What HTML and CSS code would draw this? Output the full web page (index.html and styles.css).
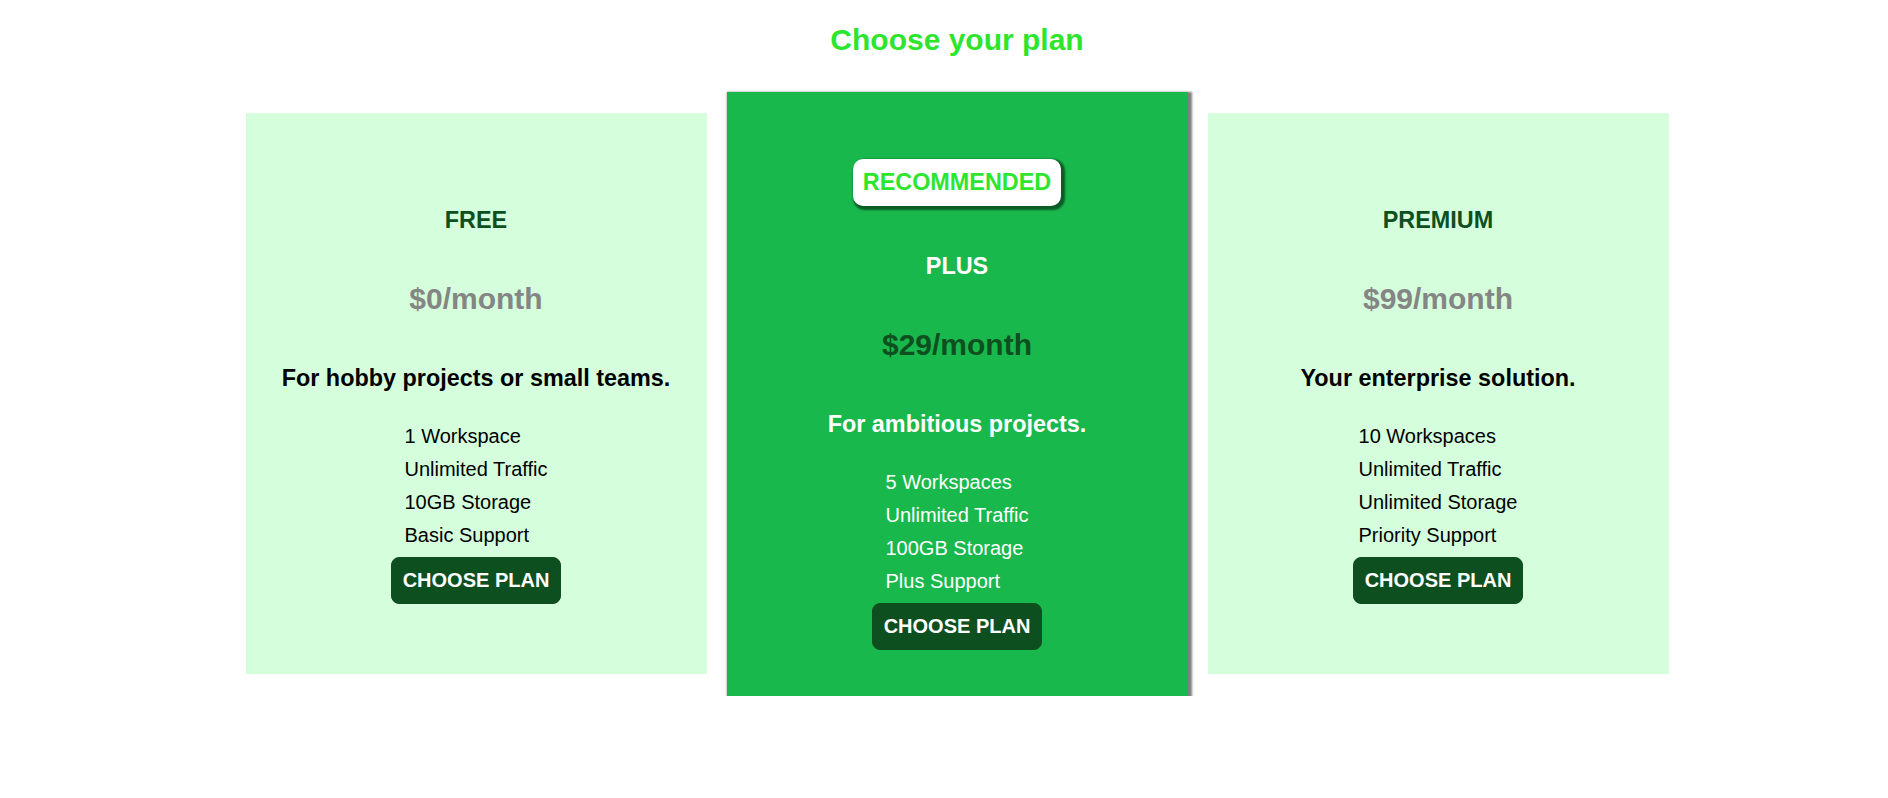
FILE: index.html
```html
<!DOCTYPE html>
<html lang="en">
<head>
<meta charset="utf-8">
<title>Choose your plan</title>
<link rel="stylesheet" href="styles.css">
</head>
<body>
<main class="page">
  <h1 class="section-title">Choose your plan</h1>
  <div class="plans">
    <article class="plan">
      <h1 class="plan__title">FREE</h1>
      <h2 class="plan__price">$0/month</h2>
      <h3 class="plan__hint">For hobby projects or small teams.</h3>
      <ul class="plan__features">
        <li class="plan__feature">1 Workspace</li>
        <li class="plan__feature">Unlimited Traffic</li>
        <li class="plan__feature">10GB Storage</li>
        <li class="plan__feature">Basic Support</li>
      </ul>
      <button class="button">CHOOSE PLAN</button>
    </article>
    <article class="plan plan--highlighted">
      <div class="plan__annotation">RECOMMENDED</div>
      <h1 class="plan__title">PLUS</h1>
      <h2 class="plan__price">$29/month</h2>
      <h3 class="plan__hint">For ambitious projects.</h3>
      <ul class="plan__features">
        <li class="plan__feature">5 Workspaces</li>
        <li class="plan__feature">Unlimited Traffic</li>
        <li class="plan__feature">100GB Storage</li>
        <li class="plan__feature">Plus Support</li>
      </ul>
      <button class="button">CHOOSE PLAN</button>
    </article>
    <article class="plan">
      <h1 class="plan__title">PREMIUM</h1>
      <h2 class="plan__price">$99/month</h2>
      <h3 class="plan__hint">Your enterprise solution.</h3>
      <ul class="plan__features">
        <li class="plan__feature">10 Workspaces</li>
        <li class="plan__feature">Unlimited Traffic</li>
        <li class="plan__feature">Unlimited Storage</li>
        <li class="plan__feature">Priority Support</li>
      </ul>
      <button class="button">CHOOSE PLAN</button>
    </article>
  </div>
</main>
</body>
</html>
```
FILE: styles.css
```css
* {
  box-sizing: border-box;
}

html, body {
  margin: 0;
  padding: 0;
  background: #ffffff;
}

body {
  font-family: "Liberation Sans", Arial, sans-serif;
  font-size: 20px;
  color: #000000;
}

.page {
  display: flex;
  flex-direction: column;
  align-items: center;
  padding: 23px 0 0 26px;
}

.section-title {
  margin: 0 0 34px;
  font-size: 30px;
  font-weight: bold;
  line-height: 34.5px;
  color: #2ee52e;
  text-align: center;
}

.plans {
  display: flex;
  align-items: center;
  justify-content: center;
  gap: 20px;
}

.plan {
  width: 461px;
  display: flex;
  flex-direction: column;
  align-items: center;
  text-align: center;
  background: #d5ffdc;
  padding: 70px 16px 70px;
}

.plan--highlighted {
  background: #19b84c;
  color: #ffffff;
  padding: 44px 16px 46px;
  box-shadow: 2px 2px 2px 2px rgba(0, 0, 0, 0.5);
}

.plan__annotation {
  margin: 23.4px 0;
  padding: 10px;
  font-size: 23.4px;
  font-weight: bold;
  line-height: 27px;
  background: #ffffff;
  color: #2ee52e;
  border-radius: 10px;
  box-shadow: 2px 2px 2px 2px rgba(0, 0, 0, 0.5);
}

.plan__title {
  margin: 23.4px 0;
  font-size: 23.4px;
  font-weight: bold;
  line-height: 27px;
  color: #0e4f1f;
}

.plan--highlighted .plan__title {
  color: #ffffff;
}

.plan__price {
  margin: 24.9px 0;
  font-size: 30px;
  font-weight: bold;
  line-height: 34.5px;
  color: #858585;
}

.plan--highlighted .plan__price {
  color: #0e4f1f;
}

.plan__hint {
  margin: 23.4px 0;
  font-size: 23.4px;
  font-weight: bold;
  line-height: 27px;
}

.plan__features {
  list-style: none;
  margin: 0;
  padding: 0;
  text-align: left;
}

.plan__feature {
  margin: 10px 0;
  line-height: 23px;
}

.button {
  margin: 0;
  font-family: inherit;
  font-size: 20px;
  font-weight: bold;
  line-height: 23px;
  color: #ffffff;
  background: #0e4f1f;
  border: 1px solid #0e4f1f;
  border-radius: 8px;
  padding: 11px;
  cursor: pointer;
}
```
